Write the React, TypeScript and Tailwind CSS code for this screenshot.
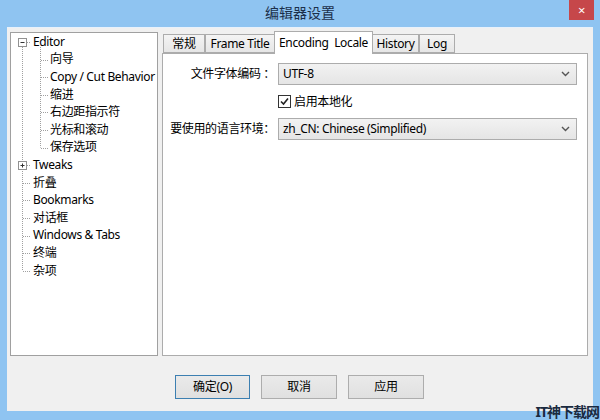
import React from "react";

const rows: { label: string; level: 0 | 1; box?: "minus" | "plus" }[] = [
  { label: "Editor", level: 0, box: "minus" },
  { label: "向导", level: 1 },
  { label: "Copy / Cut Behavior", level: 1 },
  { label: "缩进", level: 1 },
  { label: "右边距指示符", level: 1 },
  { label: "光标和滚动", level: 1 },
  { label: "保存选项", level: 1 },
  { label: "Tweaks", level: 0, box: "plus" },
  { label: "折叠", level: 0 },
  { label: "Bookmarks", level: 0 },
  { label: "对话框", level: 0 },
  { label: "Windows & Tabs", level: 0 },
  { label: "终端", level: 0 },
  { label: "杂项", level: 0 },
];

const RH = 17.6;
const C0 = 9;

function TreeLines() {
  const cy = (i: number) => C0 + i * RH;
  const dot = { stroke: "#a0a0a0", strokeWidth: 1, strokeDasharray: "1 1" };
  return (
    <svg className="absolute inset-0 pointer-events-none" width="146" height="322">
      <line x1="11.5" y1={cy(0) + 5} x2="11.5" y2={cy(13)} {...dot} />
      {[8, 9, 10, 11, 12, 13].map((i) => (
        <line key={i} x1="12" y1={Math.round(cy(i)) + 0.5} x2="20" y2={Math.round(cy(i)) + 0.5} {...dot} />
      ))}
      <line x1="16" y1={Math.round(cy(0)) + 0.5} x2="20" y2={Math.round(cy(0)) + 0.5} {...dot} />
      <line x1="16" y1={Math.round(cy(7)) + 0.5} x2="20" y2={Math.round(cy(7)) + 0.5} {...dot} />
      <line x1="29.5" y1={cy(0) + 5} x2="29.5" y2={cy(6)} {...dot} />
      {[1, 2, 3, 4, 5, 6].map((i) => (
        <line key={i} x1="30" y1={Math.round(cy(i)) + 0.5} x2="38" y2={Math.round(cy(i)) + 0.5} {...dot} />
      ))}
      {[0, 7].map((i) => {
        const y = Math.round(cy(i)) - 4;
        return (
          <g key={i}>
            <rect x="7.5" y={y + 0.5} width="8" height="8" fill="#fff" stroke="#919191" />
            <line x1="9.5" y1={y + 4.5} x2="13.5" y2={y + 4.5} stroke="#333" />
            {i === 7 && <line x1="11.5" y1={y + 2.5} x2="11.5" y2={y + 6.5} stroke="#333" />}
          </g>
        );
      })}
    </svg>
  );
}

function Chevron() {
  return (
    <svg width="9" height="6" viewBox="0 0 9 6" className="shrink-0">
      <path d="M1 1 L4.5 4.5 L8 1" fill="none" stroke="#555" strokeWidth="1.4" />
    </svg>
  );
}

function Select({ value }: { value: string }) {
  return (
    <div className="w-[299px] h-[22px] border border-[#acacac] bg-gradient-to-b from-[#f2f2f2] to-[#e5e5e5] flex items-center pl-[4px] pr-[6px]">
      <span className="flex-1">{value}</span>
      <Chevron />
    </div>
  );
}

const tabs = [
  { label: "常规", w: "w-[42px]" },
  { label: "Frame Title", w: "w-[69px]" },
  { label: "Encoding  Locale", w: "w-[99px]", active: true },
  { label: "History", w: "w-[46px]" },
  { label: "Log", w: "w-[36px]" },
];

export default function App() {
  return (
    <div className="w-[600px] h-[420px] bg-[#8fc4f1] flex flex-col relative overflow-hidden font-['Noto_Sans','Noto_Sans_CJK_SC',sans-serif] text-[12px] tracking-[-0.35px] text-black">
      {/* title bar */}
      <div className="h-[27px] shrink-0 flex items-start relative">
        <div className="flex-1 text-center text-[14px] leading-[26px] text-[#1b2f4a] tracking-normal">编辑器设置</div>
        <div className="absolute right-[6px] top-0 w-[25px] h-[20px] bg-[#c6474a] flex items-center justify-center text-white text-[13px] leading-none">
          ×
        </div>
      </div>
      {/* client */}
      <div className="mx-[7px] flex-1 bg-[#f0f0f0] border-t border-[#e8f1fb] flex flex-col pl-[3px] pr-[4px] pt-[3px]">
        <div className="flex">
          {/* tree */}
          <div className="w-[148px] h-[324px] mt-[1px] border border-[#a0a0a0] bg-white relative">
            <TreeLines />
            <div className="flex flex-col">
              {rows.map((r, i) => (
                <div
                  key={i}
                  className={`h-[17.6px] flex items-center whitespace-nowrap ${r.level === 0 ? "pl-[22px]" : "pl-[39px]"}`}
                >
                  {r.label}
                </div>
              ))}
            </div>
          </div>
          {/* tabs */}
          <div className="ml-[4px] flex flex-col w-[426px]">
            <div className="h-[22px] flex items-end pl-[1px] relative z-10">
              {tabs.map((t, i) =>
                t.active ? (
                  <div
                    key={i}
                    className={`${t.w} h-[23px] -mb-[1px] bg-white border border-b-0 border-[#acacac] flex items-center justify-center whitespace-pre`}
                  >
                    {t.label}
                  </div>
                ) : (
                  <div
                    key={i}
                    className={`${t.w} h-[19px] bg-gradient-to-b from-[#f4f4f4] to-[#e6e6e6] border border-[#acacac] ${i === 1 ? "border-r-0" : ""} ${i === 3 ? "border-l-0" : ""} flex items-center justify-center`}
                  >
                    {t.label}
                  </div>
                )
              )}
            </div>
            <div className="h-[303px] bg-white border border-[#acacac] flex flex-col pt-[9px]">
              <div className="flex items-center">
                <div className="w-[112px] text-right">文件字体编码 ：</div>
                <div className="ml-[3px]">
                  <Select value="UTF-8" />
                </div>
              </div>
              <div className="flex items-center h-[33px] pl-[115px]">
                <div className="w-[13px] h-[13px] border border-[#333] bg-white flex items-center justify-center">
                  <svg width="9" height="9" viewBox="0 0 9 9">
                    <path d="M1 4.5 L3.5 7 L8 1.5" fill="none" stroke="#222" strokeWidth="1.6" />
                  </svg>
                </div>
                <span className="ml-[3px]">启用本地化</span>
              </div>
              <div className="flex items-center">
                <div className="w-[112px] text-right">要使用的语言环境：</div>
                <div className="ml-[3px]">
                  <Select value="zh_CN: Chinese (Simplified)" />
                </div>
              </div>
            </div>
          </div>
        </div>
        {/* buttons */}
        <div className="flex gap-[11px] pl-[165px] mt-[19px]">
          <div className="w-[75px] h-[24px] border border-[#3c7fb1] bg-gradient-to-b from-[#eaeaea] to-[#e0e0e0] flex items-center justify-center">
            确定(O)
          </div>
          <div className="w-[76px] h-[24px] border border-[#adadad] bg-gradient-to-b from-[#eaeaea] to-[#e0e0e0] flex items-center justify-center">
            取消
          </div>
          <div className="w-[76px] h-[24px] border border-[#adadad] bg-gradient-to-b from-[#eaeaea] to-[#e0e0e0] flex items-center justify-center">
            应用
          </div>
        </div>
      </div>
      <div className="h-[9px] shrink-0" />
      <div className="absolute right-[1px] bottom-[1px] text-[14px] font-bold text-[#1a2a40] leading-none tracking-[-1px]">
        IT神下载网
      </div>
    </div>
  );
}
